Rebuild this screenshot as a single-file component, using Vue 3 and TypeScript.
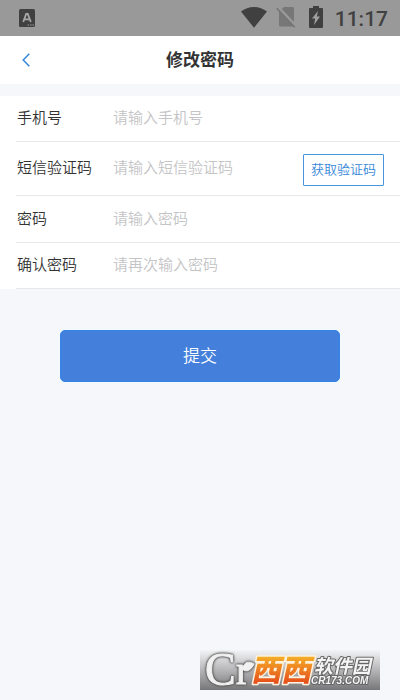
<script setup lang="ts">
import { reactive } from 'vue'

interface Field {
  key: 'phone' | 'code' | 'password' | 'confirm'
  label: string
  placeholder: string
  type: string
}

const fields: Field[] = [
  { key: 'phone', label: '手机号', placeholder: '请输入手机号', type: 'tel' },
  { key: 'code', label: '短信验证码', placeholder: '请输入短信验证码', type: 'text' },
  { key: 'password', label: '密码', placeholder: '请输入密码', type: 'password' },
  { key: 'confirm', label: '确认密码', placeholder: '请再次输入密码', type: 'password' },
]

const form = reactive({ phone: '', code: '', password: '', confirm: '' })
</script>

<template>
  <div class="page">
    <div class="status">
      <svg class="ime" width="16" height="18" viewBox="0 0 16 18">
        <rect width="16" height="18" rx="1.5" fill="#404040" />
        <path d="M4.200 13 7.200 5h1.600l3 8M5.600 10.400h4.800" fill="none" stroke="#a6a6a6" stroke-width="1.800" />
        <path d="M8.500 16h1.600M11 16h1.600M13.400 16H15" stroke="#999" stroke-width="1.200" />
      </svg>
      <svg class="wifi" width="26" height="21" viewBox="0 0 26 21">
        <path d="M0 4.600C3.600 1.800 8 0 13 0s9.400 1.800 13 4.600L13 20.800z" fill="#404040" />
      </svg>
      <svg class="sim" width="20" height="22" viewBox="0 0 20 22">
        <path d="M8 1h8.500Q18 1 18 2.500V19q0 1.500-1.500 1.500h-12Q3 20.500 3 19V6z" fill="#777" />
        <path d="M2 1.200 20 20.200" stroke="#999" stroke-width="3" />
        <path d="M.700 2.200 18.700 21.200" stroke="#747474" stroke-width="1.600" />
      </svg>
      <svg class="battery" width="14" height="22" viewBox="0 0 14 22">
        <path d="M4 0h6v2h3q1 0 1 1v18q0 1-1 1H1q-1 0-1-1V3q0-1 1-1h3z" fill="#404040" />
        <path d="M9 5 3 12.500h3.200L5 19l6-8.500H7.800z" fill="#a0a0a0" />
      </svg>
      <span class="time">11:17</span>
    </div>

    <header class="header">
      <button class="back" type="button" aria-label="返回">
        <svg width="8" height="14" viewBox="0 0 8 14">
          <path d="M7.300 .700 1.200 7l6.100 6.300" fill="none" stroke="#3687d9" stroke-width="1.500" />
        </svg>
      </button>
      <h1>修改密码</h1>
    </header>

    <form @submit.prevent>
      <div class="fields">
        <div v-for="f in fields" :key="f.key" class="row" :class="f.key">
          <label :for="f.key">{{ f.label }}</label>
          <input :id="f.key" v-model="form[f.key]" :type="f.type" :placeholder="f.placeholder" />
          <button v-if="f.key === 'code'" class="get-code" type="button">获取验证码</button>
        </div>
      </div>
      <button class="submit" type="submit">提交</button>
    </form>

    <svg class="badge" width="180" height="40" viewBox="0 0 180 40">
      <defs>
        <linearGradient id="plate" x2="0" y2="1">
          <stop offset="0" stop-color="#f3f4f6" />
          <stop offset=".3" stop-color="#cfcfd1" />
          <stop offset="1" stop-color="#777779" />
        </linearGradient>
        <linearGradient id="orange" x2="0" y2="1">
          <stop offset=".2" stop-color="#f5b329" />
          <stop offset=".85" stop-color="#e54d1b" />
        </linearGradient>
      </defs>
      <rect width="180" height="40" fill="url(#plate)" />
      <g class="mark">
        <text x="5" y="35" font-size="46">C</text>
        <text x="36" y="34" font-size="40">r</text>
        <path d="M42 19C45 11 49 11 54 14C51 20 47 23 42 19z" />
      </g>
      <g transform="translate(51 31) skewX(-12)">
        <text class="orange-text" x="0" y="0" font-size="30">西西</text>
      </g>
      <g class="outlined" transform="translate(114 23) skewX(-12)">
        <text class="name" x="0" y="0" font-size="19">软件园</text>
      </g>
      <text class="outlined site" x="111" y="34" font-size="10">CR173.COM</text>
    </svg>
  </div>
</template>

<style>
body {
  margin: 0;
  background: #f5f7fa;
}
</style>

<style scoped>
.page {
  min-height: 100vh;
  background: #f5f7fa;
  color: #333;
  font-family: "Noto Sans CJK SC", sans-serif;
}
.status {
  display: flex;
  align-items: center;
  box-sizing: border-box;
  height: 36px;
  padding: 0 12px 0 19px;
  background: #999;
}
.status svg {
  margin-bottom: 2px;
}
.status .ime {
  margin-bottom: 0;
}
.wifi {
  margin-left: auto;
}
.sim {
  margin-left: 9px;
}
.battery {
  margin-left: 13px;
}
.time {
  margin-left: 12px;
  padding-top: 2px;
  color: #404040;
  font: 500 21px/34px Roboto, sans-serif;
}
.header {
  display: grid;
  grid-template-columns: 50px 1fr 50px;
  align-items: center;
  height: 48px;
  background: #fff;
}
.back {
  display: flex;
  align-items: center;
  height: 48px;
  padding: 0 0 0 22px;
  border: 0;
  background: none;
}
h1 {
  margin: 0;
  padding-bottom: 2px;
  font-size: 17px;
  line-height: 24px;
  font-weight: 700;
  text-align: center;
}
.fields {
  margin-top: 12px;
  padding-left: 16px;
  background: #fff;
}
.row {
  display: flex;
  align-items: center;
  box-sizing: border-box;
  min-height: 46px;
  padding: 0 16px 4px 1px;
  border-bottom: 1px solid #e8e8e8;
  font-size: 15px;
  font-weight: 350;
}
.row.code {
  min-height: 54px;
}
.row.password {
  min-height: 47px;
}
label {
  flex: 0 0 96px;
}
input {
  flex: 1;
  min-width: 0;
  height: 32px;
  padding: 0;
  border: 0;
  outline: 0;
  background: none;
  color: inherit;
  font: inherit;
}
input::placeholder {
  color: #c4c4c6;
  opacity: 1;
}
.get-code {
  height: 32px;
  margin-top: 6px;
  padding: 0 7px 2px;
  border: 1px solid #4795df;
  border-radius: 1px;
  background: #fff;
  color: #3687d9;
  font: 350 13px/26px "Noto Sans CJK SC", sans-serif;
}
.submit {
  display: block;
  width: calc(100% - 120px);
  height: 52px;
  margin: 41px auto 0;
  padding: 0 0 2px;
  border: 1px solid #2e86e6;
  border-radius: 5px;
  background: #437fdb;
  color: #fff;
  font: 350 17px/24px "Noto Sans CJK SC", sans-serif;
}
.badge {
  position: fixed;
  right: 20px;
  bottom: 10px;
  overflow: visible;
}
.outlined {
  fill: #f5f5f5;
  stroke: #666;
  stroke-width: 2px;
  paint-order: stroke;
  stroke-linejoin: round;
}
.mark {
  fill: #f1f1f1;
  stroke: #f1f1f1;
  stroke-width: 1px;
  filter: drop-shadow(0 0 1px #444) drop-shadow(0 0 1px #666);
  font-family: "Liberation Serif", serif;
}
.orange-text {
  fill: url(#orange);
  stroke: #fff3df;
  stroke-width: 3px;
  paint-order: stroke;
  stroke-linejoin: round;
  font-family: "Noto Sans CJK SC", sans-serif;
  font-weight: 900;
}
.name {
  font-family: "Noto Sans CJK SC", sans-serif;
  font-weight: 700;
}
.site {
  font-family: "Liberation Sans", sans-serif;
  font-style: italic;
  font-weight: 700;
}
</style>
